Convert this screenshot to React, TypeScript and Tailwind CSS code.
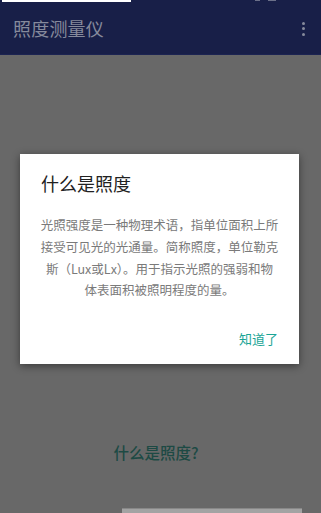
import { FC } from 'react'

const font = { fontFamily: '"Noto Sans CJK SC", "Noto Sans", sans-serif' }

export const App: FC = () => {
  return (
    <div className="relative flex flex-col w-[321px] h-[513px] overflow-hidden bg-[#686868]" style={font}>
      <header className="bg-[#181f48] h-[55px] flex flex-col">
        <div className="h-[3px] flex items-start">
          <div className="ml-[2px] w-[129px] h-[2px] bg-white" />
          <div className="ml-auto mr-[45px] flex gap-[8px]">
            <div className="w-[5px] h-[1px] bg-[#6b7089]" />
            <div className="w-[8px] h-[1px] bg-[#6b7089]" />
          </div>
        </div>
        <div className="flex items-center flex-1 pl-[13px] pr-[16px] border-b border-[#1c2452]">
          <span className="text-[18px] text-[#868a9c] tracking-[0.2px]">照度测量仪</span>
          <div className="ml-auto flex flex-col gap-[2.5px]">
            <span className="w-[3px] h-[3px] rounded-full bg-[#868a9c]" />
            <span className="w-[3px] h-[3px] rounded-full bg-[#868a9c]" />
            <span className="w-[3px] h-[3px] rounded-full bg-[#868a9c]" />
          </div>
        </div>
      </header>

      <main className="flex-1 flex flex-col items-center">
        <div className="mt-[386px] ml-[-9px] text-[15.5px] font-medium text-[#1d4a44]">什么是照度?</div>
        <div className="mt-auto self-start ml-[122px] w-[180px] h-[5px] bg-[#a3a3a3] border-t border-[#888]" />
      </main>

      <div className="absolute left-[20px] top-[154px] w-[279px] h-[210px] bg-white shadow-[0_2px_8px_rgba(0,0,0,0.45)] flex flex-col">
        <h2 className="mt-[16px] ml-[21px] text-[18px] text-[#212121] leading-[26px]">什么是照度</h2>
        <p className="mt-[18px] px-[19px] text-center text-[12.5px] leading-[21.8px] text-[#7a7a7a]">
          光照强度是一种物理术语，指单位面积上所<br />
          接受可见光的光通量。简称照度，单位勒克<br />
          斯（Lux或Lx）。用于指示光照的强弱和物<br />
          体表面积被照明程度的量。
        </p>
        <div className="mt-auto mb-[16px] mr-[21px] flex justify-end">
          <button className="text-[13px] text-[#1aa596]">知道了</button>
        </div>
      </div>
    </div>
  )
}

export default App
